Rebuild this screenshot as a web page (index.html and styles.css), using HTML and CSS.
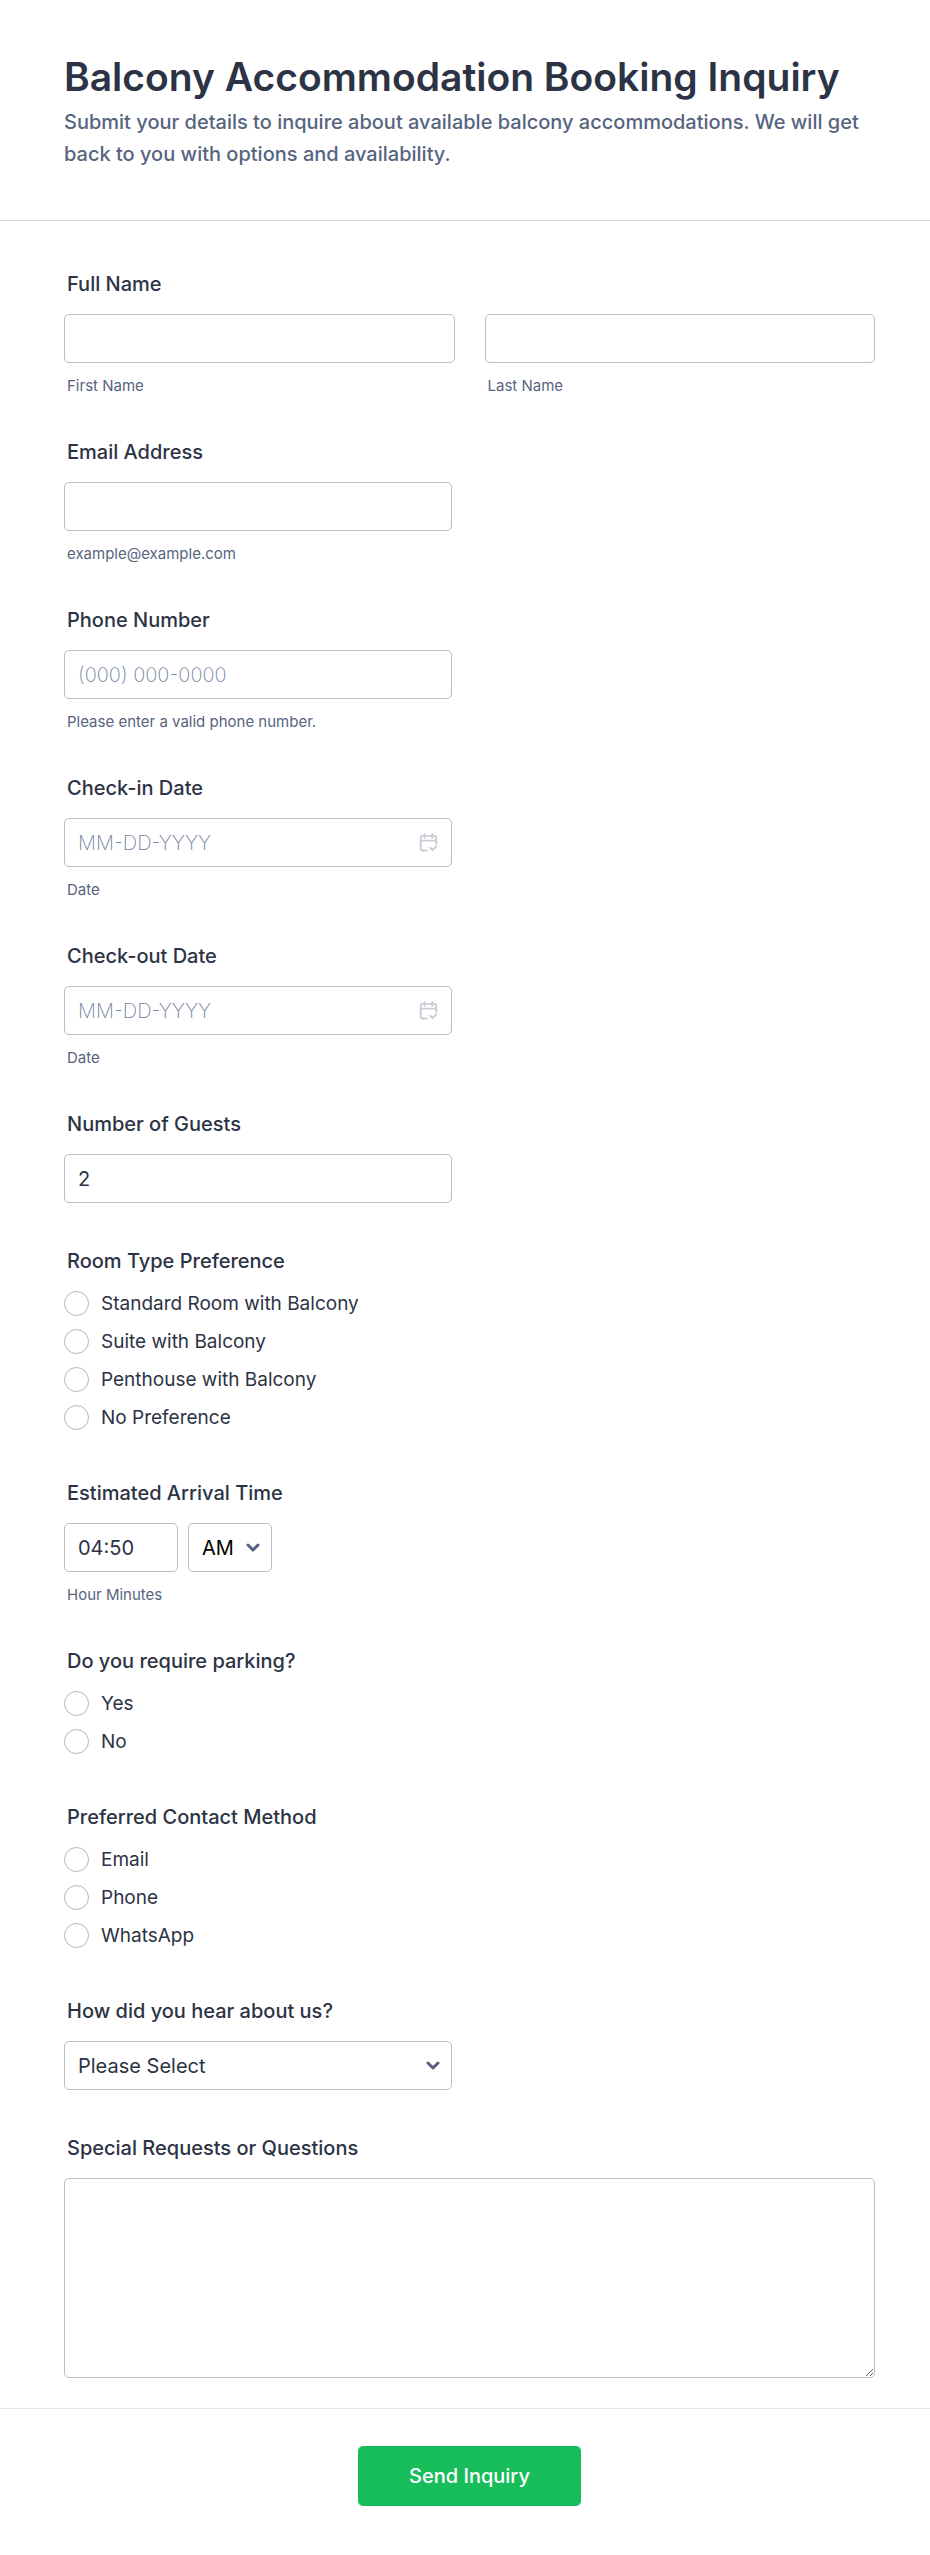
FILE: index.html
```html
<!DOCTYPE html>
<html lang="en">
<head>
  <meta charset="UTF-8" />
  <meta name="viewport" content="width=device-width, initial-scale=1" />
  <title>Balcony Accommodation Booking Inquiry</title>
  <link rel="stylesheet" href="styles.css">
</head>
<body>
  <form class="form">
    <header class="form-header">
      <h1>Balcony Accommodation Booking Inquiry</h1>
      <p>Submit your details to inquire about available balcony accommodations. We will get back to you with options and availability.</p>
    </header>

    <div class="fields">
      <fieldset class="field">
        <legend class="label">Full Name</legend>
        <div class="name-row">
          <div>
            <input class="control" type="text" id="firstName" />
            <label class="sub" for="firstName">First Name</label>
          </div>
          <div>
            <input class="control" type="text" id="lastName" />
            <label class="sub" for="lastName">Last Name</label>
          </div>
        </div>
      </fieldset>

      <div class="field">
        <label class="label" for="email">Email Address</label>
        <input class="control half" type="email" id="email" />
        <span class="sub">example@example.com</span>
      </div>

      <div class="field">
        <label class="label" for="phone">Phone Number</label>
        <input class="control half" type="tel" id="phone" placeholder="(000) 000-0000" />
        <span class="sub">Please enter a valid phone number.</span>
      </div>

      <div class="field">
        <label class="label" for="checkIn">Check-in Date</label>
        <div class="icon-wrap half">
          <input class="control" type="text" id="checkIn" placeholder="MM-DD-YYYY" />
          <svg class="calendar" viewBox="0 0 20 20" aria-hidden="true">
            <path d="M8.500 18.500H4a2.200 2.200 0 0 1-2.200-2.200V4.700A1.700 1.700 0 0 1 3.500 3h13a1.700 1.700 0 0 1 1.700 1.700v6.300M1.800 8h16.400M6 1v4M14 1v4M11.800 15.500l2.400 2.500 4.200-4.200" />
          </svg>
        </div>
        <span class="sub">Date</span>
      </div>

      <div class="field">
        <label class="label" for="checkOut">Check-out Date</label>
        <div class="icon-wrap half">
          <input class="control" type="text" id="checkOut" placeholder="MM-DD-YYYY" />
          <svg class="calendar" viewBox="0 0 20 20" aria-hidden="true">
            <path d="M8.500 18.500H4a2.200 2.200 0 0 1-2.200-2.200V4.700A1.700 1.700 0 0 1 3.500 3h13a1.700 1.700 0 0 1 1.700 1.700v6.300M1.800 8h16.400M6 1v4M14 1v4M11.800 15.500l2.400 2.500 4.200-4.200" />
          </svg>
        </div>
        <span class="sub">Date</span>
      </div>

      <div class="field">
        <label class="label" for="guests">Number of Guests</label>
        <input class="control half" type="text" inputmode="numeric" id="guests" value="2" />
      </div>

      <fieldset class="field">
        <legend class="label">Room Type Preference</legend>
        <div class="options">
          <label class="option"><input type="radio" name="room" value="standard" /> Standard Room with Balcony</label>
          <label class="option"><input type="radio" name="room" value="suite" /> Suite with Balcony</label>
          <label class="option"><input type="radio" name="room" value="penthouse" /> Penthouse with Balcony</label>
          <label class="option"><input type="radio" name="room" value="none" /> No Preference</label>
        </div>
      </fieldset>

      <div class="field">
        <label class="label" for="arrival">Estimated Arrival Time</label>
        <div class="time-row">
          <input class="control time" type="text" id="arrival" value="04:50" />
          <div class="icon-wrap ampm">
            <select class="control" aria-label="AM or PM">
              <option>AM</option>
              <option>PM</option>
            </select>
            <svg class="chevron" viewBox="0 0 14 10" aria-hidden="true"><path d="M2 2l5 5 5-5" /></svg>
          </div>
        </div>
        <span class="sub">Hour Minutes</span>
      </div>

      <fieldset class="field">
        <legend class="label">Do you require parking?</legend>
        <div class="options">
          <label class="option"><input type="radio" name="parking" value="yes" /> Yes</label>
          <label class="option"><input type="radio" name="parking" value="no" /> No</label>
        </div>
      </fieldset>

      <fieldset class="field">
        <legend class="label">Preferred Contact Method</legend>
        <div class="options">
          <label class="option"><input type="radio" name="contact" value="email" /> Email</label>
          <label class="option"><input type="radio" name="contact" value="phone" /> Phone</label>
          <label class="option"><input type="radio" name="contact" value="whatsapp" /> WhatsApp</label>
        </div>
      </fieldset>

      <div class="field">
        <label class="label" for="source">How did you hear about us?</label>
        <div class="icon-wrap half">
          <select class="control" id="source">
            <option>Please Select</option>
          </select>
          <svg class="chevron" viewBox="0 0 14 10" aria-hidden="true"><path d="M2 2l5 5 5-5" /></svg>
        </div>
      </div>

      <div class="field">
        <label class="label" for="requests">Special Requests or Questions</label>
        <textarea class="control" id="requests"></textarea>
      </div>
    </div>

    <footer class="form-footer">
      <button class="submit" type="button">Send Inquiry</button>
    </footer>
  </form>
</body>
</html>
```

FILE: styles.css
```css
* { box-sizing: border-box; }
body { margin: 0; background: #fff; color: #2c3345; font-family: Inter, sans-serif; }

.form-header { padding: 50px 64px; border-bottom: 1px solid #d7d8e1; }
.form-header h1 { margin: 0; font-size: 39px; line-height: 54px; font-weight: 600; }
.form-header p {
  margin: 2px 0 0; font-size: 20px; line-height: 32px; font-weight: 500; color: #57647e;
}

.fields {
  display: flex; flex-direction: column; gap: 46px;
  padding: 51px 55px 30px 64px;
}
.field { display: block; min-width: 0; margin: 0; padding: 0; border: 0; }
.label {
  display: block; margin-bottom: 18px; padding: 0 3px;
  font-size: 20px; line-height: 24px; font-weight: 500;
}
.sub {
  display: block; margin-top: 15px; padding: 0 3px;
  font-size: 15px; line-height: 16px; color: #57647e;
}

.control {
  display: block; width: 100%; height: 49px; margin: 0; padding: 0 13px;
  border: 1px solid #b8bdc9; border-radius: 5px; background: #fff; color: #2c3345;
  font-family: inherit; font-size: 20px; appearance: none;
}
.control::placeholder { color: #7483a0; font-weight: 200; opacity: 1; }
.half { width: 100%; max-width: 388px; }
textarea.control { height: 200px; padding: 12px 13px; resize: vertical; }

.name-row { display: grid; grid-template-columns: 1fr 1fr; gap: 30px; }
.time-row { display: flex; gap: 10px; }
.time { width: 114px; }
.ampm { width: 84px; }
.ampm .control { color: #000; }

/* icons drawn over the right end of a control */
.icon-wrap { position: relative; }
.icon-wrap svg { position: absolute; pointer-events: none; fill: none; }
.calendar {
  top: 15px; right: 14px; width: 19px; height: 19px;
  stroke: #c8cdd9; stroke-width: 2; stroke-linecap: round; stroke-linejoin: round;
}
.chevron {
  top: 20px; right: 12px; width: 14px; height: 10px;
  stroke: #57607f; stroke-width: 3; stroke-linecap: round; stroke-linejoin: round;
}

.options { display: flex; flex-direction: column; gap: 13px; padding-bottom: 5px; }
.option { display: flex; align-items: center; gap: 12px; font-size: 19px; line-height: 25px; }
.option input {
  flex: none; width: 25px; height: 25px; margin: 0;
  border: 1px solid #b0b5c4; border-radius: 50%; background: #fff; appearance: none;
}
.option input:checked { border: 7px solid #2e69ff; }

.form-footer { display: flex; justify-content: center; padding: 37px 55px 49px 64px; border-top: 1px solid #e6e8f0; }
.submit {
  min-width: 223px; padding: 0 50px; border: 0; border-radius: 5px;
  background: #18bd5b; color: #fff; font-family: inherit; font-size: 20px; line-height: 60px; font-weight: 500;
  cursor: pointer;
}
```
